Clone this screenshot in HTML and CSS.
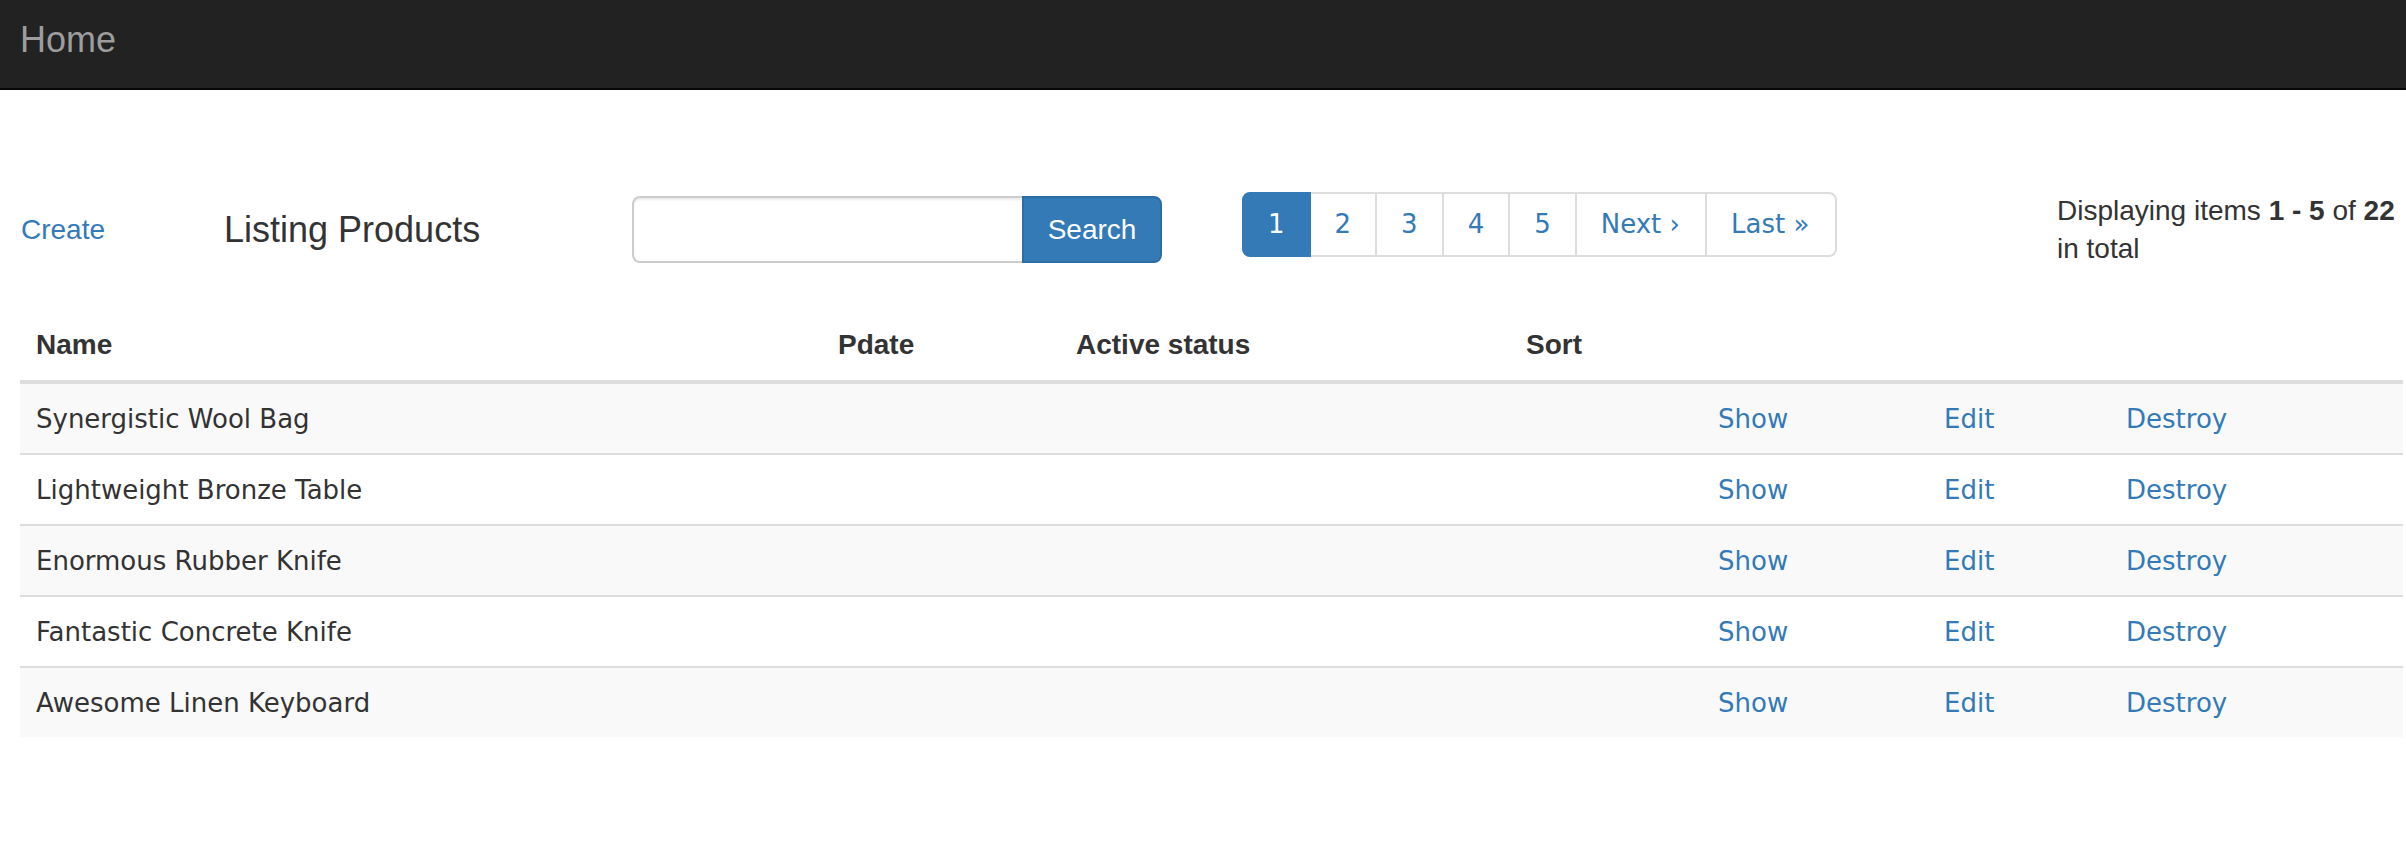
FILE: index.html
```html
<!DOCTYPE html>
<html lang="en">
<head>
<meta charset="utf-8">
<title>Listing Products</title>
<link rel="stylesheet" href="styles.css">
</head>
<body>
<nav class="navbar">
  <a class="brand" href="#">Home</a>
</nav>
<main class="page">
  <div class="toolbar">
    <div class="col col-create"><a class="link" href="#">Create</a></div>
    <div class="col col-title"><h1 class="title">Listing Products</h1></div>
    <div class="col col-search">
      <form class="search">
        <input class="search-input" type="text">
        <button class="search-btn" type="button">Search</button>
      </form>
    </div>
    <div class="col col-pager">
      <ul class="pagination">
        <li class="active"><span>1</span></li>
        <li><a href="#">2</a></li>
        <li><a href="#">3</a></li>
        <li><a href="#">4</a></li>
        <li><a href="#">5</a></li>
        <li><a href="#">Next ›</a></li>
        <li><a href="#">Last »</a></li>
      </ul>
    </div>
    <div class="col col-info">Displaying items <b>1&nbsp;-&nbsp;5</b> of <b>22</b> in total</div>
  </div>

  <table class="products">
    <colgroup>
      <col class="c-name"><col class="c-pdate"><col class="c-active"><col class="c-sort">
      <col class="c-show"><col class="c-edit"><col class="c-destroy">
    </colgroup>
    <thead>
      <tr><th>Name</th><th>Pdate</th><th>Active status</th><th>Sort</th><th></th><th></th><th></th></tr>
    </thead>
    <tbody>
      <tr><td>Synergistic Wool Bag</td><td></td><td></td><td></td><td><a href="#">Show</a></td><td><a href="#">Edit</a></td><td><a href="#">Destroy</a></td></tr>
      <tr><td>Lightweight Bronze Table</td><td></td><td></td><td></td><td><a href="#">Show</a></td><td><a href="#">Edit</a></td><td><a href="#">Destroy</a></td></tr>
      <tr><td>Enormous Rubber Knife</td><td></td><td></td><td></td><td><a href="#">Show</a></td><td><a href="#">Edit</a></td><td><a href="#">Destroy</a></td></tr>
      <tr><td>Fantastic Concrete Knife</td><td></td><td></td><td></td><td><a href="#">Show</a></td><td><a href="#">Edit</a></td><td><a href="#">Destroy</a></td></tr>
      <tr><td>Awesome Linen Keyboard</td><td></td><td></td><td></td><td><a href="#">Show</a></td><td><a href="#">Edit</a></td><td><a href="#">Destroy</a></td></tr>
    </tbody>
  </table>
</main>
</body>
</html>
```

FILE: styles.css
```css
* { box-sizing: border-box; }

html, body {
  margin: 0;
  padding: 0;
  background: #fff;
}

body {
  font-family: "Liberation Sans", Arial, Helvetica, sans-serif;
  font-size: 28px;
  line-height: 38px;
  color: #333;
  overflow: hidden;
}

a { color: #337ab7; text-decoration: none; }

/* Navbar */
.navbar {
  height: 90px;
  background: #222;
  border-bottom: 2px solid #080808;
  padding-left: 20px;
}

.brand {
  display: inline-block;
  padding-top: 20px;
  font-size: 36px;
  line-height: 40px;
  color: #9d9d9d;
}

/* Page */
.page {
  padding-left: 20px;
}

.toolbar {
  display: flex;
  align-items: flex-start;
  margin-top: 102px;
}

.col-create { width: 201px; margin-top: 19px; padding-left: 1px; }
.col-title { width: 411px; padding-left: 3px; }
.col-search { width: 610px; margin-top: 4px; }
.col-pager { width: 815px; }
.col-info { width: 349px; line-height: 38px; }

.title {
  margin: 17px 0 0 0;
  font-size: 36px;
  line-height: 41px;
  font-weight: normal;
  color: #333;
}

/* Search */
.search {
  display: flex;
  width: 530px;
  height: 67px;
  margin: 0;
}

.search-input {
  width: 390px;
  height: 67px;
  border: 2px solid #ccc;
  border-right: 0;
  border-radius: 8px 0 0 8px;
  box-shadow: inset 0 2px 2px rgba(0, 0, 0, 0.075);
  font-size: 27px;
  padding: 0 22px;
  outline: none;
}

.search-btn {
  width: 140px;
  height: 67px;
  background: #337ab7;
  border: 2px solid #2e6da4;
  border-radius: 0 8px 8px 0;
  color: #fff;
  font-family: "Liberation Sans", Arial, sans-serif;
  font-size: 28px;
  padding: 0;
}

/* Pagination */
.pagination {
  display: flex;
  list-style: none;
  margin: 0;
  padding: 0;
  font-family: "DejaVu Sans", Verdana, sans-serif;
  font-size: 26px;
}

.pagination li a,
.pagination li span {
  display: block;
  padding: 11px 24px;
  line-height: 39px;
  border: 2px solid #ddd;
  margin-left: -2px;
  color: #337ab7;
  background: #fff;
}

.pagination li:first-child span,
.pagination li:first-child a {
  margin-left: 0;
  border-radius: 8px 0 0 8px;
}

.pagination li.wide a,
.pagination li:nth-child(6) a {
  padding-right: 25px;
}

.pagination li:last-child a {
  padding-right: 26px;
  border-radius: 0 8px 8px 0;
}

.pagination li.active span {
  position: relative;
  z-index: 2;
  background: #337ab7;
  border-color: #337ab7;
  color: #fff;
}

/* Table */
.products {
  width: 2383px;
  margin-top: 41px;
  border-collapse: collapse;
  border-spacing: 0;
  table-layout: fixed;
}

.c-name { width: 802px; }
.c-pdate { width: 238px; }
.c-active { width: 450px; }
.c-sort { width: 192px; }
.c-show { width: 226px; }
.c-edit { width: 182px; }
.c-destroy { width: 293px; }

.products th {
  text-align: left;
  font-weight: bold;
  font-size: 28px;
  line-height: 39px;
  padding: 16px 15px 16px 16px;
  border-bottom: 4px solid #ddd;
  color: #333;
}

.products td {
  font-family: "DejaVu Sans", Verdana, sans-serif;
  font-size: 26px;
  line-height: 39px;
  padding: 16px 15px 14px 16px;
  border-top: 2px solid #ddd;
  color: #333;
  white-space: nowrap;
}

.products tbody tr:nth-child(odd) {
  background: #f9f9f9;
}
```
